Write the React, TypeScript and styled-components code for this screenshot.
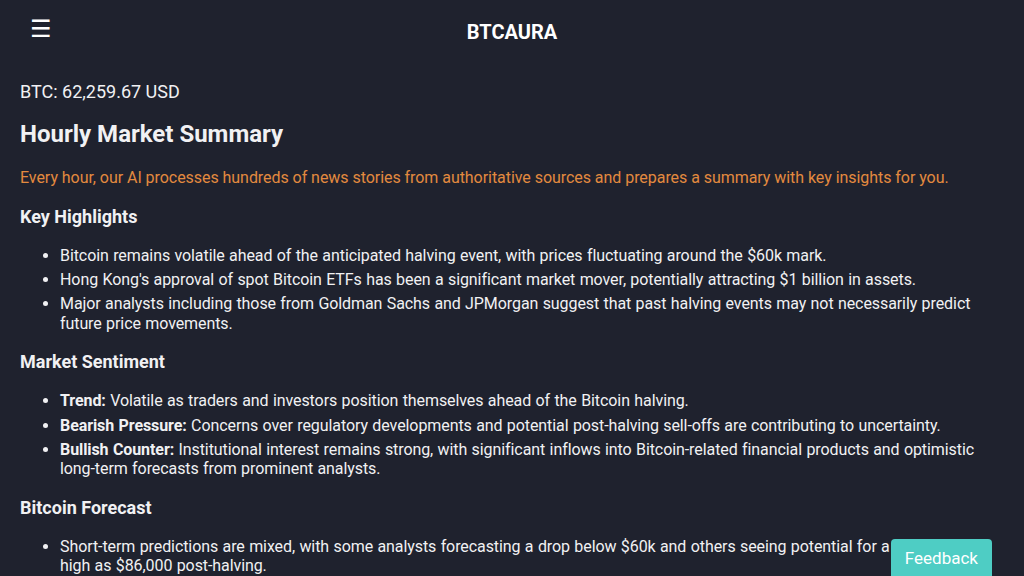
import React from "react";
import styled, { createGlobalStyle } from "styled-components";

const GlobalStyle = createGlobalStyle`
  html, body {
    margin: 0;
    padding: 0;
    background: #1f222e;
    color: #f1f1f3;
    font-family: Roboto, "Noto Sans", sans-serif;
    overflow: hidden;
  }
`;

const Header = styled.header`
  position: relative;
  height: 64px;
  display: flex;
  align-items: center;
  justify-content: center;
`;

const MenuButton = styled.button`
  position: absolute;
  left: 30px;
  top: 15px;
  background: none;
  border: none;
  color: #fff;
  font-size: 24px;
  line-height: 28px;
  padding: 0;
  cursor: pointer;
  font-family: "DejaVu Sans", sans-serif;
`;

const Brand = styled.h1`
  margin: 0;
  font-size: 20px;
  font-weight: 700;
  color: #fff;
`;

const Main = styled.main`
  padding: 17px 49px 0 20px;
`;

const Price = styled.div`
  font-size: 18px;
  line-height: 21px;
`;

const Title = styled.h2`
  font-size: 24px;
  font-weight: 700;
  margin: 18px 0 20px;
  line-height: 28px;
`;

const Intro = styled.p`
  color: #e38a3f;
  font-size: 16px;
  line-height: 19px;
  letter-spacing: -0.05px;
  margin: 0 0 19px;
`;

const Section = styled.h3`
  font-size: 18px;
  font-weight: 700;
  line-height: 21px;
  margin: 0 0 19px;
`;

const List = styled.ul`
  margin: 0 0 18.5px;
  padding-left: 40px;
`;

const Item = styled.li`
  font-size: 16px;
  line-height: 19.2px;
  letter-spacing: -0.08px;
  word-spacing: 0.5px;
  margin-bottom: 5px;
  &:last-child {
    margin-bottom: 0;
  }
  b {
    font-weight: 700;
  }
`;

const FeedbackButton = styled.button`
  position: fixed;
  right: 32px;
  bottom: -4px;
  background: #4ecdc4;
  color: #fff;
  border: none;
  border-radius: 4px 4px 0 0;
  font-family: Roboto, sans-serif;
  font-size: 17px;
  padding: 9px 14px 12px;
  cursor: pointer;
`;

const App = () => {
  return (
    <>
      <GlobalStyle />
      <Header>
        <MenuButton aria-label="menu">☰</MenuButton>
        <Brand>BTCAURA</Brand>
      </Header>
      <Main>
        <Price>BTC: 62,259.67 USD</Price>
        <Title>Hourly Market Summary</Title>
        <Intro>
          Every hour, our AI processes hundreds of news stories from authoritative sources and
          prepares a summary with key insights for you.
        </Intro>

        <Section>Key Highlights</Section>
        <List>
          <Item>
            Bitcoin remains volatile ahead of the anticipated halving event, with prices
            fluctuating around the $60k mark.
          </Item>
          <Item>
            Hong Kong's approval of spot Bitcoin ETFs has been a significant market mover,
            potentially attracting $1 billion in assets.
          </Item>
          <Item>
            Major analysts including those from Goldman Sachs and JPMorgan suggest that past
            halving events may not necessarily predict future price movements.
          </Item>
        </List>

        <Section>Market Sentiment</Section>
        <List>
          <Item>
            <b>Trend:</b> Volatile as traders and investors position themselves ahead of the
            Bitcoin halving.
          </Item>
          <Item>
            <b>Bearish Pressure:</b> Concerns over regulatory developments and potential
            post-halving sell-offs are contributing to uncertainty.
          </Item>
          <Item>
            <b>Bullish Counter:</b> Institutional interest remains strong, with significant
            inflows into Bitcoin-related financial products and optimistic long-term forecasts
            from prominent analysts.
          </Item>
        </List>

        <Section>Bitcoin Forecast</Section>
        <List>
          <Item>
            Short-term predictions are mixed, with some analysts forecasting a drop below $60k
            and others seeing potential for a rally as high as $86,000 post-halving.
          </Item>
        </List>
      </Main>
      <FeedbackButton>Feedback</FeedbackButton>
    </>
  );
};

export default App;
